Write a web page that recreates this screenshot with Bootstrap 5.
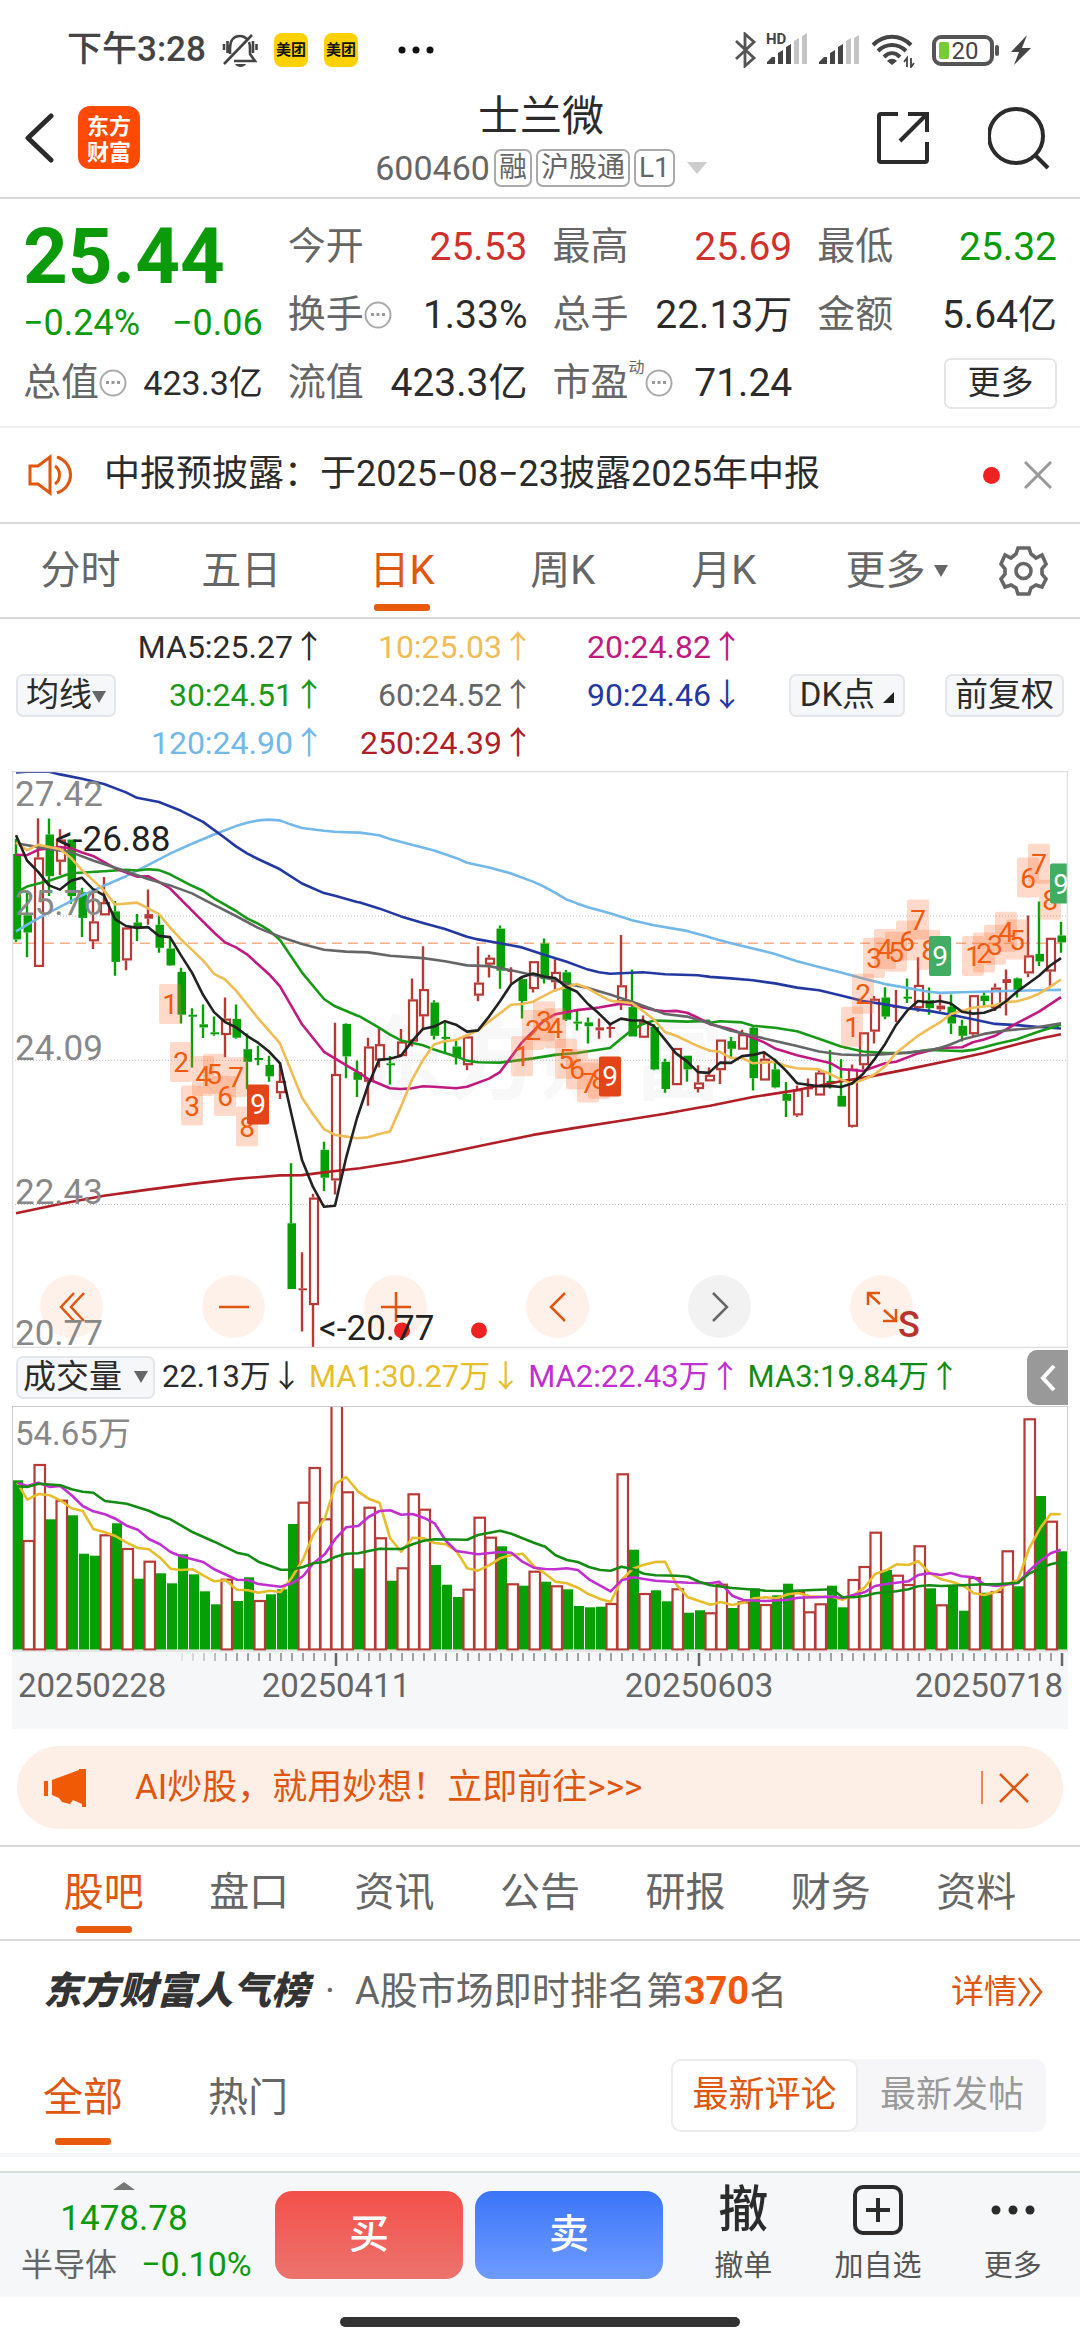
<!DOCTYPE html>
<html lang="zh-CN">
<head>
<meta charset="utf-8">
<meta name="viewport" content="width=device-width, initial-scale=1">
<title>士兰微 600460</title>
<link href="https://cdn.jsdelivr.net/npm/bootstrap@5.3.0/dist/css/bootstrap.min.css" rel="stylesheet">
<style>
:root{--ink:#2b2b2b;--dim:#666;--brand:#e0560f;--up:#d0312d;--down:#0a9a0a;--rule:#d9d9d9;--panel:#f6f7f9}
body{font-family:Roboto,"Noto Sans CJK SC",sans-serif;color:var(--ink);background:#fff;line-height:1.2;overflow-x:hidden}
svg{display:block;flex:none}
a{color:inherit;text-decoration:none}
button{font-family:inherit;color:inherit}
.plain{border:0;background:none;padding:0}
.status{height:100px;padding:0 48px 0 67px;color:#444}
.clock{font-size:35px;font-weight:500}
.mt{width:34px;height:34px;border-radius:8px;background:#ffd100;color:#111;font-size:15px;font-weight:700;line-height:34px;text-align:center;white-space:nowrap;overflow:hidden}
.dots{margin-left:40px}
.batt{width:62px;height:31px;border:4px solid #555;border-radius:9px;font-size:24px;line-height:24px;text-align:center;position:relative}
.batt::before{content:"";position:absolute;left:3px;top:3px;bottom:3px;width:10px;background:#7c3;border-radius:2px}
.batt::after{content:"";position:absolute;right:-9px;top:6px;width:4px;height:11px;background:#555;border-radius:2px}
.batt span{position:relative}
.head{height:99px;padding:0 30px 18px 24px;border-bottom:2px solid var(--rule)}
.logo{width:62px;height:63px;border-radius:12px;background:#ff4a05;color:#fff;font-family:"Noto Sans CJK SC",sans-serif;font-weight:700;font-size:22px;line-height:26px;text-align:center;padding-top:5px}
.side{width:180px}
.share{margin-right:58px}
.stock{font-size:42px;line-height:56px}
.code{font-size:34px;line-height:46px;color:var(--dim)}
.chip{border:2px solid #aaa;border-radius:7px;font-size:28px;line-height:34px;padding:0 3px;color:var(--dim)}
.tri{display:inline-block;width:0;height:0;vertical-align:middle;border:7px solid transparent;border-bottom:0;border-top:12px solid #666}
.tri.pick{border-width:12px 10px 0;border-top-color:#ccc}
.quote{display:grid;grid-template-columns:repeat(4,minmax(0,1fr));grid-auto-rows:68px;column-gap:25px;padding:14px 23px 9px 23px;border-bottom:2px solid #eee}
.price{grid-row:span 2}
.price strong{font-size:78px;line-height:88px;font-weight:700}
.chg{font-size:36px;line-height:44px}
.cellx{display:flex;align-items:center;font-size:39px;white-space:nowrap}
.cellx dt{font-weight:400;font-size:38px;color:var(--dim);display:flex;align-items:center}
.cellx dd{margin:0 0 0 auto}
.cellx.tight dd{font-size:34px}
.g{color:var(--down)}.r{color:var(--up)}
.more{width:113px;height:51px;border:2px solid #e6e6e6;border-radius:7px;background:#fff;font-size:33px;padding:0;line-height:46px;margin-left:auto}
.news{height:96px;padding:0 28px;border-bottom:2px solid var(--rule);font-size:36px}
.dot{width:17px;height:17px;border-radius:50%;background:#ee2222}
.tabs{height:95px;border-bottom:2px solid var(--rule);font-size:40px;color:var(--dim)}
.tabs a,.subtabs a{position:relative;display:flex;align-items:center;justify-content:center;height:100%}
.tabs a{flex:1 1 0}
.ktabs{padding-right:32px}
.ktabs a:nth-child(6){padding:0 12px}
.gear{margin-left:10px}
.on{color:var(--brand)}
.on::after{content:"";position:absolute;bottom:6px;left:50%;width:56px;height:7px;margin-left:-28px;border-radius:3px;background:#e85a0c}
.ma{height:152px;padding:0 16px}
.pill{border:2px solid #e3e6ea;border-radius:7px;background:var(--panel);font-size:33px;height:43px;line-height:38px;padding:0 8px;white-space:nowrap}
.pill.dk{width:116px;margin-right:40px}
.mas{display:grid;grid-template-columns:200px 209px 209px;font-size:32px;line-height:48px;text-align:right}
.arr{font-family:"Noto Sans CJK SC",sans-serif;margin-right:-9px;line-height:1}
.chart{margin:0 12px;position:relative}
.chart svg.plot{width:100%;height:auto;position:relative;pointer-events:none}
.chart svg text{font-family:Roboto,"Noto Sans CJK SC",sans-serif}
.tools{position:absolute;left:28px;bottom:10px;gap:99px}
.tools button{width:63px;height:63px;border-radius:50%;background:#fef1ea;display:flex;align-items:center;justify-content:center}
.tools button.off{background:#f2f2f2}
.vol{height:58px;margin:0 12px;padding-left:4px;font-size:31px;position:relative;white-space:nowrap}
.vol .pill{padding:0 5px;width:139px}
.vol .arr{margin:0}
.vol>span{margin-left:7px}
.fold{position:absolute;right:0;top:2px;width:41px;height:55px;background:#999;border-radius:10px 0 0 10px}
.axis{background:#f6f7f9}
.promo{margin:17px 17px 16px;height:83px;border-radius:42px;background:#fdeee6;color:var(--brand);font-size:35px;padding:0 34px 0 26px}
.promo .bar{width:2px;height:33px;background:#e58a5c}
.info{border-top:2px solid var(--rule);height:96px;padding:0 31px}
.rank{height:101px;padding:0 36px 0 43px;font-size:38px;color:var(--dim)}
.rank b{font-weight:900;font-style:italic;color:#333}
.rank em{font-style:normal;font-weight:700;color:#f0580c}
.rank .detail{color:var(--brand);font-size:33px}
.subtabs{height:115px;padding:0 34px 0 43px;border-bottom:4px solid #f3f5f7;font-size:40px;color:var(--dim)}
.subtabs .on::after{bottom:8px}
.subtabs .hot{margin-left:85px}
.seg{height:73px;border-radius:10px;background:#f6f6f8;font-size:36px;color:#999;margin-bottom:4px}
.seg button{height:73px;width:188px;border-radius:10px}
.seg .sel{background:#fff;border:2px solid #ececec;color:var(--brand);width:187px}
.dock{margin-top:14px;height:126px;background:#f6f7f9;border-top:2px solid #d6dcd8;color:#333}
.idx{width:275px;padding-left:21px}
.idx .n{font-size:35px;line-height:42px}
.idx .m{font-size:32px;line-height:48px;color:var(--dim)}
.idx .m .g{font-size:34px}
.trade{width:188px;height:88px;border:0;border-radius:17px;color:#fff;font-size:40px;font-weight:500}
.buy{background:linear-gradient(#f4504a,#ec736d)}
.sell{background:linear-gradient(#3b76f8,#6f9bff)}
.acts{padding-left:13px}
.act{font-size:29px;color:#555;line-height:36px;flex:1 1 0}
.act .ic{height:48px;margin-bottom:14px;display:flex;align-items:center;justify-content:center;font-size:50px;font-weight:500;color:#2b2b2b}
.home{width:400px;height:10px;border-radius:5px;background:#333;margin:20px auto 13px}
</style>
<script src="https://cdn.jsdelivr.net/npm/bootstrap@5.3.0/dist/js/bootstrap.bundle.min.js"></script>
</head>
<body>
<div class="status d-flex align-items-center">
  <span class="clock me-3">下午3:28</span>
  <svg width="36" height="36" viewBox="0 0 36 36" fill="none" stroke="#444" stroke-width="2.6"><path d="M8 22v-6C8 8 12 4 18 4c3 0 5 1 7 3M27 10c1 2 1 4 1 7v5l5 7H12M2 32L30 3M2 12v6M5.500 9v12M31 9v12M34.500 12v6"/><path d="M13 32h11c-2 4-9 4-11 0z" fill="#444" stroke="none"/></svg>
  <span class="mt ms-3">美团</span><span class="mt ms-3">美团</span>
  <svg class="dots me-auto" width="36" height="8" viewBox="0 0 36 8" fill="#111"><circle cx="4" cy="4" r="3.5"/><circle cx="18" cy="4" r="3.5"/><circle cx="32" cy="4" r="3.5"/></svg>
  <svg width="24" height="36" viewBox="0 0 24 36" fill="none" stroke="#555" stroke-width="2.8"><path d="M2 9l18 17-9 8V2l9 8L2 27"/></svg>
  <svg class="ms-2" width="44" height="36" viewBox="0 0 44 36"><path d="M1 32v-2l5-5h3v7zM12 21l5-3v14h-5zM20 15l5-3v20h-5z" fill="#444"/><path d="M28 9l5-3v26h-5zM36 4l5-3v31h-5z" fill="#c4c4c4"/><text x="0" y="12" font-size="15" font-weight="700" fill="#444">HD</text></svg>
  <svg class="ms-2" width="44" height="36" viewBox="0 0 44 36"><path d="M1 32v-2l5-5h3v7zM12 21l5-3v14h-5zM20 15l5-3v20h-5z" fill="#444"/><path d="M28 9l5-3v26h-5zM36 6l5-3v29h-5z" fill="#c4c4c4"/></svg>
  <svg class="ms-2" width="46" height="36" viewBox="0 0 46 36" fill="none" stroke="#444" stroke-width="4"><path d="M3 13c11-11 27-11 38 0M8 19c8-8 20-8 28 0M14 25c5-5 11-5 16 0"/><path d="M17 29c3-3 7-3 10 0l-5 4z" fill="#444" stroke="none"/><path d="M37 35v-9l-3 4M41 26v9l3-4" stroke-width="1.800"/></svg>
  <span class="batt ms-3"><span class="ps-1">20</span></span>
  <svg class="ms-3" width="22" height="30" viewBox="0 0 22 30" fill="#444"><path d="M17 0L1 17h8L4 30 21 13h-9z"/></svg>
</div>

<header class="head d-flex align-items-center justify-content-between">
  <div class="side d-flex align-items-center mb-1">
    <button class="plain me-4" aria-label="返回"><svg width="30" height="50" viewBox="0 0 30 50" fill="none" stroke="#2b2b2b" stroke-width="5" stroke-linecap="round" stroke-linejoin="round"><path d="M27 3L4 25l23 22"/></svg></button>
    <div class="logo">东方<br>财富</div>
  </div>
  <div class="text-center ps-2">
    <div class="stock">士兰微</div>
    <div class="code d-flex align-items-center gap-1"><span>600460</span><span class="chip">融</span><span class="chip">沪股通</span><span class="chip">L1</span><i class="tri pick ms-2"></i></div>
  </div>
  <div class="side d-flex align-items-center justify-content-end mb-1">
    <button class="plain share" aria-label="分享"><svg width="54" height="54" viewBox="0 0 54 54" fill="none" stroke="#2b2b2b" stroke-width="4"><path d="M22 3H5a2 2 0 0 0-2 2v44a2 2 0 0 0 2 2h44a2 2 0 0 0 2-2V31M24 30L51 3M32 3h19v18"/></svg></button>
    <button class="plain" aria-label="搜索"><svg width="62" height="64" viewBox="0 0 62 64" fill="none" stroke="#2b2b2b" stroke-width="4"><circle cx="28" cy="30" r="27"/><path d="M47 49l13 13"/></svg></button>
  </div>
</header>

<dl class="quote mb-0">
  <div class="price g"><strong>25.44</strong><div class="chg d-flex justify-content-between"><span>−0.24%</span><span>−0.06</span></div></div>
  <div class="cellx"><dt>今开</dt><dd class="r">25.53</dd></div>
  <div class="cellx"><dt>最高</dt><dd class="r">25.69</dd></div>
  <div class="cellx"><dt>最低</dt><dd class="g">25.32</dd></div>
  <div class="cellx"><dt>换手<svg width="28" height="28" viewBox="0 0 28 28"><use href="#tip"/></svg></dt><dd>1.33%</dd></div>
  <div class="cellx"><dt>总手</dt><dd>22.13万</dd></div>
  <div class="cellx"><dt>金额</dt><dd>5.64亿</dd></div>
  <div class="cellx tight"><dt>总值<svg width="28" height="28" viewBox="0 0 28 28"><use href="#tip"/></svg></dt><dd>423.3亿</dd></div>
  <div class="cellx"><dt>流值</dt><dd>423.3亿</dd></div>
  <div class="cellx"><dt>市盈<small class="fs-6 align-self-start lh-1">动</small><svg width="28" height="28" viewBox="0 0 28 28"><g id="tip"><circle cx="14" cy="14" r="12.5" fill="none" stroke="#aaa" stroke-width="2"/><path d="M7 12h3v3H7zM12.500 12h3v3h-3zM18 12h3v3h-3z" fill="#999"/></g></svg></dt><dd>71.24</dd></div>
  <div class="cellx"><button class="more">更多</button></div>
</dl>

<div class="news d-flex align-items-center">
  <svg width="48" height="42" viewBox="0 0 48 42" fill="none" stroke="#e0560f" stroke-width="3"><path d="M2 12h8L22 3v36l-12-9H2zM27 12c6 4 6 14 0 18M29 3c18 6 18 30 0 36"/></svg>
  <span class="ms-4 ps-1">中报预披露：于2025−08−23披露2025年中报</span>
  <span class="dot ms-auto"></span>
  <button class="plain ms-4" aria-label="关闭"><svg width="28" height="28" viewBox="0 0 28 28" stroke="#999" stroke-width="3"><path d="M1 1l26 26M27 1L1 27"/></svg></button>
</div>

<nav class="tabs ktabs d-flex align-items-center">
  <a href="#">分时</a><a href="#">五日</a><a href="#" class="on">日K</a><a href="#">周K</a><a href="#">月K</a><a href="#">更多<i class="tri ms-2"></i></a>
  <button class="plain gear" aria-label="设置"><svg width="49" height="50" viewBox="0 0 49 50" fill="none" stroke="#666" stroke-width="3.600"><path d="M19 2H30L32 8 37 12 43 9 47 18 43 23V28L47 33 43 41 37 39 32 42 30 48H19L17 42 12 39 6 41 2 33 6 28V23L2 18 6 9 12 12 17 8Z"/><circle cx="24.500" cy="25" r="7.500"/></svg></button>
</nav>

<section class="ma d-flex align-items-center">
  <button class="pill">均线<i class="tri"></i></button>
  <div class="mas">
    <span>MA5:25.27<span class="arr">↑</span></span><span style="color:#f0bc55">10:25.03<span class="arr">↑</span></span><span style="color:#c01a80">20:24.82<span class="arr">↑</span></span>
    <span style="color:#189a18">30:24.51<span class="arr">↑</span></span><span style="color:#666">60:24.52<span class="arr">↑</span></span><span style="color:#2338a0">90:24.46<span class="arr">↓</span></span>
    <span style="color:#72b8e8">120:24.90<span class="arr">↑</span></span><span style="color:#b01e28">250:24.39<span class="arr">↑</span></span>
  </div>
  <button class="pill dk ms-auto">DK点 <svg class="d-inline-block" width="11" height="11" viewBox="0 0 10 10"><path d="M10 0v10H0z" fill="#222"/></svg></button>
  <button class="pill">前复权</button>
</section>

<section class="chart">
  <div class="tools d-flex">
    <button class="plain" aria-label="最左"><svg width="26" height="30" viewBox="0 0 26 30" fill="none" stroke="#e0560f" stroke-width="2.500"><path d="M15 1L2 15l13 14M25 1L12 15l13 14"/></svg></button>
    <button class="plain" aria-label="缩小"><svg width="30" height="30" viewBox="0 0 30 30" stroke="#e0560f" stroke-width="2.500"><path d="M0 15h30"/></svg></button>
    <button class="plain" aria-label="放大"><svg width="30" height="30" viewBox="0 0 30 30" stroke="#e0560f" stroke-width="2.500"><path d="M0 15h30M15 0v30"/></svg></button>
    <button class="plain" aria-label="左移"><svg width="18" height="30" viewBox="0 0 18 30" fill="none" stroke="#e0560f" stroke-width="2.500"><path d="M16 1L2 15l14 14"/></svg></button>
    <button class="plain off" aria-label="右移"><svg width="18" height="30" viewBox="0 0 18 30" fill="none" stroke="#666" stroke-width="2.500"><path d="M2 1l14 14L2 29"/></svg></button>
    <button class="plain" aria-label="全屏"><svg width="32" height="32" viewBox="0 0 32 32" fill="none" stroke="#e0560f" stroke-width="2.500"><path d="M14 2H2v12M2 2l12 11M30 18v12H17M30 30L18 19"/></svg></button>
  </div>
  <svg class="plot" id="kline" viewBox="0 0 1056 577"></svg>
</section>

<section class="vol d-flex align-items-center">
  <button class="pill d-flex align-items-center justify-content-between">成交量<i class="tri"></i></button>
  <span>22.13万<span class="arr">↓</span></span>
  <span style="color:#e8bd2c">MA1:30.27万<span class="arr">↓</span></span>
  <span style="color:#c22fd0">MA2:22.43万<span class="arr">↑</span></span>
  <span style="color:#148c14">MA3:19.84万<span class="arr">↑</span></span>
  <button class="plain fold" aria-label="收起"><svg class="mx-auto" width="16" height="26" viewBox="0 0 16 26" fill="none" stroke="#fff" stroke-width="4"><path d="M14 1L3 13l11 12"/></svg></button>
</section>
<section class="chart"><svg class="plot" id="volume" viewBox="0 0 1056 246"></svg></section>
<section class="chart axis"><svg class="plot" id="axis" viewBox="0 0 1056 77"></svg></section>

<aside class="promo d-flex align-items-center">
  <svg width="44" height="38" viewBox="0 0 44 38" fill="#f05a05"><path d="M1 12h4v15H1zM9 11L36 1V0h7v38h-4v-3L30 31l-3 4-4-1-4-1-3-4-7-3z"/></svg>
  <a href="#" class="ms-5">AI炒股，就用妙想！立即前往&gt;&gt;&gt;</a>
  <span class="bar ms-auto me-3"></span>
  <button class="plain" aria-label="关闭"><svg width="30" height="30" viewBox="0 0 30 30" stroke="#e0560f" stroke-width="2.500"><path d="M1 1l28 28M29 1L1 29"/></svg></button>
</aside>

<nav class="tabs info d-flex">
  <a href="#" class="on">股吧</a><a href="#">盘口</a><a href="#">资讯</a><a href="#">公告</a><a href="#">研报</a><a href="#">财务</a><a href="#">资料</a>
</nav>

<div class="rank d-flex align-items-center">
  <b>东方财富人气榜</b><span class="mx-3">·</span><span class="ms-1">A股市场即时排名第<em>370</em>名</span>
  <a href="#" class="detail ms-auto d-flex align-items-center">详情<svg width="27" height="32" viewBox="0 0 27 32" fill="none" stroke="#e0560f" stroke-width="2.500"><path d="M2 2l10 14L2 30M13 2l11 14-11 14"/></svg></a>
</div>

<div class="subtabs d-flex align-items-center">
  <a href="#" class="on">全部</a><a href="#" class="hot me-auto">热门</a>
  <div class="seg d-flex"><button class="plain sel">最新评论</button><button class="plain">最新发帖</button></div>
</div>

<footer class="dock d-flex align-items-center">
  <div class="idx">
    <div class="text-center g n pe-5"><svg class="mx-auto mb-2" width="22" height="8" viewBox="0 0 22 8"><path d="M0 8L11 0l11 8z" fill="#777"/></svg>1478.78</div>
    <div class="m">半导体<span class="g ms-4">−0.10%</span></div>
  </div>
  <button class="trade buy me-2">买</button>
  <button class="trade sell ms-1">卖</button>
  <div class="acts d-flex flex-fill">
    <button class="plain act"><span class="ic">撤</span>撤单</button>
    <button class="plain act"><span class="ic"><svg width="50" height="50" viewBox="0 0 50 50" fill="none" stroke="#2b2b2b" stroke-width="4"><rect x="2" y="2" width="46" height="46" rx="8"/><path d="M25 13v24M13 25h24"/></svg></span>加自选</button>
    <button class="plain act"><span class="ic"><svg width="44" height="10" viewBox="0 0 44 10" fill="#2b2b2b"><circle cx="5" cy="5" r="4.500"/><circle cx="22" cy="5" r="4.500"/><circle cx="39" cy="5" r="4.500"/></svg></span>更多</button>
  </div>
</footer>
<div class="home"></div>

<script>
const RED='#b83a36', GREEN='#06a006', kc=577/1508;
const kx=v=>(v/3-12).toFixed(1), ky=v=>((v-28)*kc).toFixed(1);
// Candles: direction, high, body top, body bottom, low (plot grid units)
const candles=`g 205 245 468 475,g 340 405 450 515,r 152 254 540 540,g 152 194 303 355,r 180 207 265 300,g 207 207 355 375,g 333 345 412 462,r 345 421 473 493,r 305 371 405 405,g 368 395 527 563,r 437 437 523 549,g 402 424 438 472,r 338 402 414 430,g 405 430 490 503,g 465 492 536 538,g 542 553 665 688,g 648 665 670 803,g 638 690 698 726,g 670 711 716 720,r 620 675 718 776,g 638 676 725 728,g 714 755 788 860,g 746 778 783 797,g 772 796 826 840,r 790 838 870 885,g 1053 1210 1382 1382,r 1286 1380 1385 1493,r 1133 1143 1424 1536,g 997 1018 1091 1126,r 686 820 1098 1135,g 688 689 774 831,g 785 815 835 880,r 725 748 840 903,r 697 742 785 803,g 773 792 796 847,r 702 735 773 775,r 570 625 735 748,r 486 598 669 702,g 627 633 720 730,g 686 723 727 768,g 733 748 776 795,r 722 722 797 810,r 486 581 615 630,r 508 516 534 568,g 432 440 550 597,r 541 548 551 583,g 568 572 629 675,r 525 525 598 607,g 466 479 572 583,r 520 553 580 604,g 548 554 678 681,g 653 683 688 706,g 672 685 695 740,r 675 698 706 728,r 690 697 701 725,r 457 588 632 653,g 547 645 722 722,r 667 683 725 725,g 690 697 808 810,g 780 788 859 869,r 752 752 849 849,g 772 772 808 840,r 797 842 859 868,r 803 822 839 839,r 730 730 810 846,g 723 734 754 777,r 704 716 756 756,g 695 699 831 863,r 762 780 837 837,g 780 808 855 857,g 841 872 890 932,r 850 860 928 932,r 832 855 860 880,r 808 816 876 876,g 757 838 842 858,g 781 877 905 905,r 795 806 958 960,r 711 711 797 808,r 616 623 709 740,g 593 620 670 677,r 600 642 646 684,g 570 618 622 634,r 515 587 648 657,g 594 627 648 665,r 612 641 651 656,g 612 644 688 715,g 678 694 720 735,r 614 614 716 720,g 604 615 629 642,r 583 594 648 655,r 547 572 582 667,g 568 570 605 620,r 406 510 557 567,g 369 506 526 538,r 464 464 552 590,g 422 458 476 503`.split(',').map(s=>s.split(' '));
// Moving averages: colour, x/y points in three panes that start at 0, 1080 and 2130
const panes=(o,s)=>s.split('|').map((p,i)=>p.trim().split(' ').map(q=>{const[a,b]=q.split(',');return[+a+o[i],+b]})).flat();
const lines=[
['#b01e28','48,1184 180,1160 312,1138 444,1122 576,1107 708,1094 840,1085 906,1084 972,1077 1038,1070|0,1066 123,1049 255,1027 387,1003 519,979 651,960 783,942 915,924 1014,908|0,903 129,880 261,862 393,839 459,830 591,808 723,784 822,765 921,742 987,728 1053,716'],
['#72b8e8','48,447 114,413 180,383 246,353 312,328 378,303 444,274 510,244 576,218 642,194 708,172 741,163 774,157 807,155 840,157 873,168 906,177 972,184 1005,187 1071,189|0,189 57,196 90,206 156,221 222,236 288,255 321,268 387,280 453,296 519,317 552,330 585,346 618,363 651,374 684,384 750,400 816,418 882,431 981,446 1047,462|0,463 63,478 129,492 195,506 261,525 327,540 393,555 459,570 525,585 591,595 657,605 690,608 756,606 888,603 987,601 1053,600'],
['#2338a0','48,32 81,30 147,30 180,37 246,48 312,62 378,84 411,98 477,109 543,132 609,161 675,203 708,225 741,243 774,258 840,285 906,322 972,347 1005,354 1071,370|0,372 57,387 123,408 189,425 255,441 321,461 354,468 420,478 486,489 552,508 618,526 684,547 717,554 750,558 849,554 915,559 1014,562|0,566 63,570 129,575 195,583 261,594 327,601 393,615 459,629 525,638 591,648 657,655 723,665 789,677 855,689 921,692 987,697 1053,701'],
['#189a18','48,345 81,330 147,315 213,295 312,290 378,286 411,288 444,285 477,287 510,298 576,328 609,341 642,361 708,394 741,413 774,427 807,444 840,470 906,555 972,624 1005,643 1071,667|0,670 57,699 90,717 123,732 189,745 222,756 288,774 321,785 354,789 420,790 519,779 585,770 651,765 750,752 783,728 816,705 849,689 882,680 915,681 981,683 1047,681|0,686 30,682 96,685 129,694 195,699 261,708 327,728 393,748 459,761 525,765 591,765 657,757 723,759 756,760 789,757 822,750 855,742 921,729 987,709 1053,691'],
['#c01a80','48,247 81,248 114,234 180,227 213,230 246,241 279,250 345,282 411,304 444,303 477,318 510,335 576,393 642,450 675,476 708,489 741,507 807,559 840,591 906,690 972,762 1038,797|0,818 24,833 90,857 123,859 156,857 189,852 222,853 288,857 321,853 387,832 420,815 486,737 552,680 585,664 651,653 717,646 783,636 816,639 882,653 915,656 948,655 981,660 1014,673 1047,688|0,690 60,702 129,725 162,737 195,753 261,771 360,791 393,807 459,812 525,792 558,788 624,766 690,752 756,750 789,737 822,730 855,720 921,687 987,657 1053,619'],
['#666','48,217 114,227 213,240 279,262 378,290 444,310 510,327 576,348 642,378 708,407 774,438 840,461 906,480 972,495 1038,500|24,502 90,511 189,517 255,525 321,536 387,538 453,549 519,561 585,574 618,584 684,595 750,612 816,631 882,652 915,663 981,670 1047,687|60,706 129,720 195,734 261,747 327,761 393,769 459,771 525,768 591,764 657,758 690,752 723,742 756,730 822,715 888,706 954,701 987,697 1053,687'],
['#f0bc55','48,215 81,235 114,221 180,232 213,255 246,287 312,340 345,377 411,372 477,402 510,437 543,468 609,523 642,558 675,573 708,602 774,674 840,740 906,882 939,925 972,964 1005,979 1071,988|24,985 57,977 90,970 123,905 156,835 189,783 222,743 255,734 288,731 354,706 387,683 453,639 486,637 519,631 585,601 651,585 684,596 717,613 750,628 816,635 849,655 882,678 915,710 948,720 1014,747|0,759 30,762 63,778 96,778 129,792 195,788 228,799 261,805 327,808 360,820 393,834 426,845 459,835 492,822 525,800 558,765 624,720 657,702 690,685 723,663 789,647 855,640 888,632 921,630 954,622 987,610 1020,592 1053,573'],
['#222','48,196 81,262 114,291 147,327 180,338 213,315 246,307 279,337 312,353 345,415 378,433 411,438 444,436 477,459 510,462 543,510 576,555 609,613 642,658 675,684 708,698 741,720 774,738 807,761 840,792 873,920 906,1045 939,1115 972,1167 1005,1164 1038,1040 1071,935|24,850 57,783 90,780 123,772 156,734 189,702 222,696 255,682 288,691 321,709 354,706 387,670 420,630 453,586 486,566 519,557 552,565 585,569 618,592 651,605 684,637 717,662 750,690 783,675 816,680 849,680 882,695 915,730 948,766 981,787 1014,815 1047,817|30,790 63,791 96,773 129,770 162,763 195,784 228,811 261,844 294,848 327,852 360,851 393,854 426,845 459,820 492,783 525,742 558,692 591,655 624,629 657,633 690,629 723,636 756,657 789,662 822,660 855,650 888,630 921,605 954,584 987,563 1020,537 1053,517']];
// Nine-turn marks: first candle, tops of the nine marks, colour of the last one
const marks=[[14,[585,736,850,773,767,825,776,905,847],'#e34418'],[46,[721,653,630,648,728,755,790,780,774],'#e34418'],[76,[644,558,464,441,448,419,364,443,459],'#40ad62'],[87,[459,450,430,396,416,254,218,312,270],'#40ad62']];
let s='<clipPath id="kc"><rect width="1056" height="577"/></clipPath><g clip-path="url(#kc)">';
s+='<text x="528" y="321" text-anchor="middle" font-size="92" font-weight="700" fill="#f8f8f8">东方财富</text>';
for(const y of[407,784,1161])s+=`<path d="M0 ${ky(y)}H1056" stroke="#bbb" stroke-dasharray="1 2"/>`;
s+=`<path d="M0 ${ky(478)}H1056" stroke="#f5b08a" stroke-width="1.500" stroke-dasharray="10 6"/>`;
candles.forEach(([d,h,t,b,l],i)=>{const x=4+11*i,c=d=='g'?GREEN:RED,Y=v=>+ky(v);
 s+=`<path d="M${x} ${Y(h)}V${Y(t)}M${x} ${Y(b)}V${Y(l)}" stroke="${c}" stroke-width="2.400"/>`;
 const hh=Math.max(2,Y(b)-Y(t));
 s+=(d=='g'||hh<6)?`<rect x="${x-3.5}" y="${Y(t)}" width="8.500" height="${hh}" fill="${c}"/>`:`<rect x="${x-3}" y="${Y(t)+1}" width="8" height="${hh-2}" fill="#fff" stroke="${c}" stroke-width="2.200"/>`});
for(const[c,p]of lines)s+=`<polyline fill="none" stroke="${c}" stroke-width="2.600" stroke-linejoin="round" points="${panes([0,1080,2130],p).map(([x,y])=>kx(x)+','+ky(y)).join(' ')}"/>`;
for(const[i0,tops,c]of marks)tops.forEach((t,k)=>{const x=4+11*(i0+k),y=+ky(t),e=k==8;
 s+=`<rect x="${x-11}" y="${y}" width="22" height="40" rx="2" fill="${e?c:'#ff7337'}" fill-opacity="${e?1:.27}"/><text x="${x}" y="${y+30}" text-anchor="middle" font-size="28" fill="${e?'#fff':'#f05a0c'}">${k+1}</text>`});
s+='</g>';
[['27.42',120],['25.76',403],['24.09',783],['22.43',1160],['20.77',1529]].forEach(([t,y])=>s+=`<text x="3" y="${ky(y)}" font-size="35" fill="#888">${t}</text>`);
s+=`<circle cx="390" cy="${ky(1490)}" r="8" fill="#ee2222"/><circle cx="467" cy="${ky(1490)}" r="8" fill="#ee2222"/>`;
s+=`<text x="43" y="${ky(237)}" font-size="35" fill="#222">&lt;-26.88</text><text x="307" y="${ky(1516)}" font-size="35" fill="#222">&lt;-20.77</text>`;
s+=`<text x="886" y="${ky(1508)}" font-size="36" font-weight="500" fill="#b83430">S</text>`;
s+='<rect x="0.500" y="0.500" width="1055" height="576" fill="none" stroke="#dedede" stroke-width="1.500"/>';
kline.innerHTML=s;

// Volume bars: direction and top edge
const vols='g423 r602 r374 g540 r481 g528 g643 g649 r585 g552 r626 g718 r664 g702 g732 g645 g705 g756 g795 r718 g785 g714 r782 g765 g750 g554 r487 r383 r537 r190 r456 g687 r502 r594 g724 r684 r462 r508 g677 g736 g773 r748 r532 r592 g621 r732 g739 r694 g727 r738 g750 g800 g804 g802 r791 r402 g631 r761 g753 g786 r747 g820 g813 r819 r733 g806 r786 g747 r794 g768 g733 r755 r816 r792 g739 g804 r719 r680 r577 g692 r706 r734 r618 g747 r795 g737 g814 r713 g760 r755 r633 g741 r237 g470 r544 g636'.split(' ');
const vx=v=>(v/2.9037-12).toFixed(1), vy=v=>((v-200)/3).toFixed(1);
const vlines=[
['#e8bd2c','50,430 79,481 112,464 145,468 175,483 208,507 240,515 271,569 305,579 335,590 368,610 400,626 432,630 465,655 495,688 525,692 560,690 590,708 622,726 655,723 688,751 720,753 750,760 783,754 815,758 847,715 880,660 910,585 943,537 975,433 1005,413 1040,457 1070,478 1102,490 1133,597 1165,637 1198,595 1230,597 1262,611 1295,615 1325,635 1357,687 1388,694 1420,678 1452,657 1485,647 1517,643 1550,680|15,703 45,727 78,732 110,745 142,765 175,779 205,788 237,722 270,688 302,676 335,668 363,667 397,737 430,774 462,785 495,796 525,788 558,797 590,790 622,777 655,774 687,777 720,765 750,761 783,771 815,772 848,772 878,781 910,768 942,745 973,704 1005,693 1035,675 1070,677 1098,665 1130,700 1165,720 1198,728 1230,740 1260,762 1290,767 1325,757 1355,735 1388,722 1420,628 1452,567 1483,524 1512,525'],
['#c22fd0','50,430 79,440 112,430 145,443 175,440 208,468 240,500 271,516 305,525 335,538 368,559 400,571 432,599 465,615 495,638 525,651 590,668 622,690 688,721 720,722 750,734 815,742 847,732 880,710 910,672 943,645 975,597 1005,564 1040,560 1070,533 1102,515 1133,513 1165,526 1198,524 1230,535 1262,552 1295,605 1325,635 1388,645 1452,638 1485,640 1517,667 1550,685|15,689 45,690 78,687 110,692 142,720 205,756 237,723 270,714 335,724 430,730 495,732 520,727 558,769 590,782 655,785 720,781 750,775 848,772 878,776 910,767 942,759 973,740 1005,734 1070,726 1098,707 1130,702 1165,707 1192,701 1225,711 1260,714 1290,735 1325,740 1388,731 1420,695 1452,665 1483,642 1512,631'],
['#148c14','50,441 79,443 112,433 175,438 208,450 240,457 271,460 305,485 368,493 432,514 465,530 495,540 560,579 622,607 688,640 720,647 750,667 783,679 815,691 847,691 880,683 910,672 943,668 975,652 1005,643 1040,642 1102,628 1165,629 1198,615 1230,604 1262,600 1357,601 1388,587 1452,574 1485,583 1550,610|15,622 45,648 78,662 110,668 142,683 175,692 205,694 237,682 270,690 302,703 335,708 397,709 430,712 462,727 495,738 558,746 655,754 720,755 848,750 878,773 910,774 942,770 973,762 1035,756 1070,750 1098,741 1130,738 1165,740 1225,738 1290,735 1325,735 1388,730 1420,703 1452,687 1483,675 1502,670']];
s='<text x="3" y="'+vy(318)+'" font-size="33" fill="#888">54.65万</text>';
// green bars first so that the outlined bars keep both edges
for(const pass of'gr')vols.forEach((v,i)=>{if(v[0]!=pass)return;const x=1+11*i,y=+vy(v.slice(1));
 s+=pass=='g'?`<rect x="${x}" y="${y}" width="10" height="${243.5-y}" fill="#06a006"/>`:`<rect x="${x-.5}" y="${y+1}" width="10.500" height="${242.5-y}" fill="#fff" stroke="${RED}" stroke-width="2.200"/>`});
for(const[c,p]of vlines)s+=`<polyline fill="none" stroke="${c}" stroke-width="2.600" stroke-linejoin="round" points="${panes([0,1568],p).map(([x,y])=>vx(x)+','+vy(y)).join(' ')}"/>`;
s+='<rect x="0.500" y="0.500" width="1055" height="244.500" fill="none" stroke="#ccc"/>';
volume.innerHTML=s;

s='';
for(let k=0;k<=80;k++){const x=170+11*k,m=k==14||k==47||k==80;s+=`<path d="M${x} 1v${m?13:8}" stroke="#666" stroke-width="${m?2.5:1.2}" opacity="${Math.min(1,.2+k*.15)}"/>`}
for(const[x,a,t]of[[6,'start','20250228'],[324,'middle','20250411'],[687,'middle','20250603'],[1051,'end','20250718']])s+=`<text x="${x}" y="45" text-anchor="${a}" font-size="33" fill="#666">${t}</text>`;
axis.innerHTML=s;
</script>
</body>
</html>
